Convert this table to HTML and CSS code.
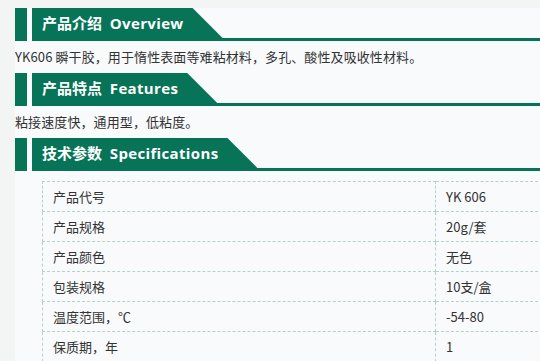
FILE: index.html
```html
<!DOCTYPE html>
<html lang="zh-CN">
<head>
<meta charset="utf-8">
<title>YK606</title>
<link rel="stylesheet" href="styles.css">
</head>
<body>
<div class="page">
  <div class="hd">
    <span class="mark"></span>
    <div class="bar"><h2 class="title">产品介绍&nbsp;&nbsp;<span class="en">Overview</span></h2></div>
  </div>
  <p class="txt">YK606 瞬干胶，用于惰性表面等难粘材料，多孔、酸性及吸收性材料。</p>

  <div class="hd">
    <span class="mark"></span>
    <div class="bar"><h2 class="title">产品特点&nbsp;&nbsp;<span class="en">Features</span></h2></div>
  </div>
  <p class="txt">粘接速度快，通用型，低粘度。</p>

  <div class="hd">
    <span class="mark"></span>
    <div class="bar"><h2 class="title">技术参数&nbsp;&nbsp;<span class="en">Specifications</span></h2></div>
  </div>
  <table class="spec">
    <tr><td class="k">产品代号</td><td>YK 606</td></tr>
    <tr><td class="k">产品规格</td><td>20g/套</td></tr>
    <tr><td class="k">产品颜色</td><td>无色</td></tr>
    <tr><td class="k">包装规格</td><td>10支/盒</td></tr>
    <tr><td class="k">温度范围，℃</td><td>-54-80</td></tr>
    <tr><td class="k">保质期，年</td><td>1</td></tr>
  </table>
</div>
</body>
</html>
```

FILE: styles.css
```css
html, body {
  margin: 0;
  padding: 0;
}
body {
  background: #f3f5f5;
  font-family: "Noto Sans CJK SC", "Noto Sans", sans-serif;
  color: #333;
  overflow: hidden;
}
.page {
  margin: 8px 0 0 15px;
  background: #f8fafc;
  overflow: hidden;
  height: 353px;
}
.hd {
  display: flex;
  height: 33px;
}
.mark {
  width: 12px;
  background: #077357;
  margin-right: 5px;
  flex: none;
}
.bar {
  flex: 1;
  display: flex;
  border-bottom: 3px solid #077357;
  height: 30px;
}
.title {
  margin: 0;
  background: #077357;
  color: #fff;
  font-family: "Open Sans", "Noto Sans CJK SC", sans-serif;
  font-size: 15px;
  font-weight: bold;
  line-height: 30px;
  height: 30px;
  padding: 0 39px 0 10px;
  white-space: nowrap;
  clip-path: polygon(0 0, calc(100% - 30px) 0, 100% 100%, 0 100%);
}
.title .en {
  letter-spacing: 0.35px;
}
.txt {
  margin: 0;
  height: 32px;
  line-height: 32px;
  font-size: 13px;
  letter-spacing: 0.1px;
  color: #333;
  white-space: nowrap;
}
.spec {
  margin: 10px 0 0 27px;
  border-collapse: collapse;
  width: 620px;
  font-size: 13px;
  color: #333;
}
.spec td {
  border: 1px dashed #b3d3c8;
  height: 29px;
  line-height: 29px;
  padding: 0 10px;
  white-space: nowrap;
}
.spec td.k {
  width: 372px;
}
```
